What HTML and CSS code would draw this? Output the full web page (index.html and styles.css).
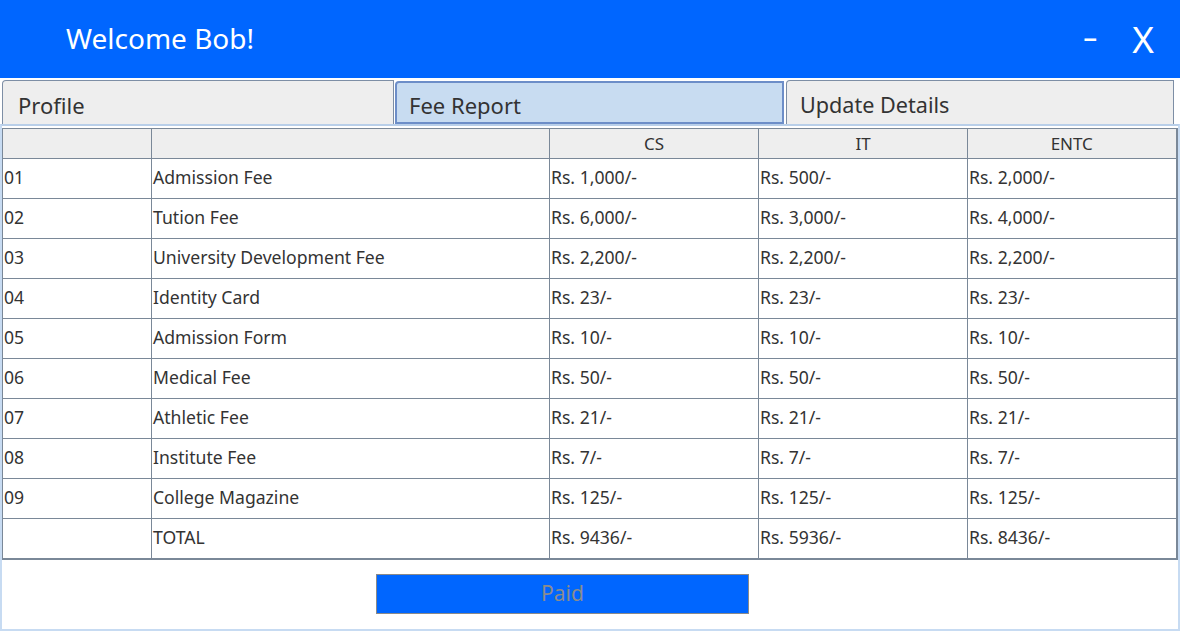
FILE: index.html
```html
<!DOCTYPE html>
<html>
<head>
<meta charset="utf-8">
<link rel="stylesheet" href="styles.css">
</head>
<body>
<div class="app">
  <header class="topbar">
    <div class="welcome">Welcome Bob!</div>
    <div class="controls">
      <span class="minimize">-</span>
      <span class="close">X</span>
    </div>
  </header>
  <nav class="tabs">
    <div class="tab tab-profile">Profile</div>
    <div class="tab tab-fee active">Fee Report</div>
    <div class="tab tab-update">Update Details</div>
  </nav>
  <main class="panel">
    <table class="fees">
      <colgroup>
        <col class="c-no"><col class="c-name"><col class="c-val"><col class="c-val"><col class="c-val">
      </colgroup>
      <thead>
        <tr><th></th><th></th><th>CS</th><th>IT</th><th>ENTC</th></tr>
      </thead>
      <tbody>
        <tr><td>01</td><td>Admission Fee</td><td>Rs. 1,000/-</td><td>Rs. 500/-</td><td>Rs. 2,000/-</td></tr>
        <tr><td>02</td><td>Tution Fee</td><td>Rs. 6,000/-</td><td>Rs. 3,000/-</td><td>Rs. 4,000/-</td></tr>
        <tr><td>03</td><td>University Development Fee</td><td>Rs. 2,200/-</td><td>Rs. 2,200/-</td><td>Rs. 2,200/-</td></tr>
        <tr><td>04</td><td>Identity Card</td><td>Rs. 23/-</td><td>Rs. 23/-</td><td>Rs. 23/-</td></tr>
        <tr><td>05</td><td>Admission Form</td><td>Rs. 10/-</td><td>Rs. 10/-</td><td>Rs. 10/-</td></tr>
        <tr><td>06</td><td>Medical Fee</td><td>Rs. 50/-</td><td>Rs. 50/-</td><td>Rs. 50/-</td></tr>
        <tr><td>07</td><td>Athletic Fee</td><td>Rs. 21/-</td><td>Rs. 21/-</td><td>Rs. 21/-</td></tr>
        <tr><td>08</td><td>Institute Fee</td><td>Rs. 7/-</td><td>Rs. 7/-</td><td>Rs. 7/-</td></tr>
        <tr><td>09</td><td>College Magazine</td><td>Rs. 125/-</td><td>Rs. 125/-</td><td>Rs. 125/-</td></tr>
        <tr class="total"><td></td><td>TOTAL</td><td>Rs. 9436/-</td><td>Rs. 5936/-</td><td>Rs. 8436/-</td></tr>
      </tbody>
    </table>
    <div class="actions">
      <button class="paid" disabled>Paid</button>
    </div>
  </main>
</div>
</body>
</html>
```
FILE: styles.css
```css
html, body {
  margin: 0;
  padding: 0;
  background: #ffffff;
}
body {
  width: 1180px;
  height: 631px;
  overflow: hidden;
  font-family: "Noto Sans", "Open Sans", "DejaVu Sans", sans-serif;
  color: #333333;
}
.app {
  display: flex;
  flex-direction: column;
  width: 1180px;
  height: 631px;
}
.topbar {
  height: 78px;
  background: #0066ff;
  display: flex;
  align-items: center;
  justify-content: space-between;
  padding: 0 26px 0 66px;
  color: #ffffff;
  box-sizing: border-box;
  flex: none;
}
.welcome {
  font-size: 28px;
  padding-bottom: 3px;
}
.controls {
  display: flex;
  align-items: center;
  gap: 37px;
}
.minimize {
  font-size: 32px;
  transform: scaleX(1.5);
  padding-bottom: 6px;
}
.close {
  font-size: 37px;
  font-weight: 400;
  padding-bottom: 2px;
}
.tabs {
  margin-top: 2px;
  height: 44px;
  display: flex;
  padding-left: 2px;
  flex: none;
  box-sizing: border-box;
}
.tab {
  box-sizing: border-box;
  height: 44px;
  background: #eeeeee;
  border: 1px solid #7d8ea5;
  border-bottom: none;
  border-top-left-radius: 4px;
  font-size: 22px;
  padding: 11px 0 0 15px;
  line-height: 26px;
  color: #333333;
}
.tab-profile { width: 392px; }
.tab-fee { width: 389px; margin-left: 1px; }
.tab-update { width: 388px; margin-left: 2px; }
.tab-update { padding-left: 13px; font-size: 21.6px; }
.tab.active {
  background: #c8dcf1;
  border: 2px solid #6d8ec8;
  height: 43px;
  margin-top: 1px;
  padding: 9px 0 0 12px;
}
.panel {
  flex: 1;
  border: 2px solid #c7dbf2;
  border-top-color: #b9cfe9;
  box-sizing: border-box;
  padding: 2px 2px 0 0;
  display: flex;
  flex-direction: column;
}
.fees {
  width: 1175px;
  border-collapse: collapse;
  table-layout: fixed;
  font-size: 17.6px;
  border: 1px solid #7a8898;
  border-right: 2px solid #7a8898;
  border-bottom: 2px solid #7a8898;
}
.c-no { width: 149px; }
.c-name { width: 398px; }
.c-val { width: 209px; }
.fees th {
  height: 29px;
  background: #eeeeee;
  font-weight: 400;
  font-size: 17px;
  line-height: 20px;
  text-align: center;
  border: 1px solid #7a8898;
  padding: 0;
  color: #333333;
}
.fees td {
  height: 40px;
  line-height: 22px;
  border: 1px solid #7a8898;
  padding: 0 0 3px 1px;
  box-sizing: border-box;
  text-align: left;
  white-space: nowrap;
  color: #333333;
}
.actions {
  padding: 14px 0 0 374px;
}
.paid {
  width: 373px;
  height: 40px;
  background: #0066ff;
  border: 1px solid #8a8a8a;
  color: #8c8c8c;
  font-family: "Noto Sans", "Open Sans", "DejaVu Sans", sans-serif;
  font-size: 21px;
  padding: 0 0 2px 0;
  margin: 0;
}
```
